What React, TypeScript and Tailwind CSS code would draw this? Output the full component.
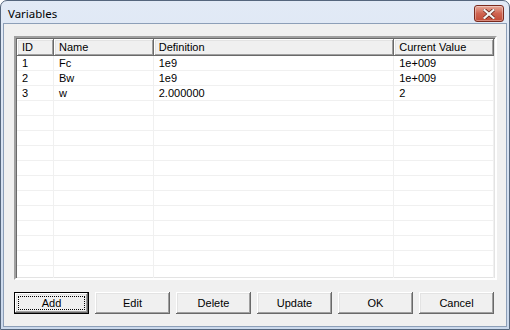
import { useState } from "react";

type Row = { id: number; name: string; def: string; value: string };

const rows: Row[] = [
  { id: 1, name: "Fc", def: "1e9", value: "1e+009" },
  { id: 2, name: "Bw", def: "1e9", value: "1e+009" },
  { id: 3, name: "w", def: "2.000000", value: "2" },
];

const raised =
  "shadow-[inset_-1px_-1px_#696969,inset_1px_1px_#ffffff,inset_-2px_-2px_#a0a0a0,inset_2px_2px_#e3e3e3]";

const cols = ["w-[37px]", "w-[100px]", "w-[241px]", "w-[100px]"];

const WinButton = ({ label, isDefault }: { label: string; isDefault?: boolean }) => {
  if (isDefault) {
    return (
      <button className="w-[75px] h-[22px] border border-black bg-[#f0f0f0] p-0">
        <div className={`w-full h-full p-[3px] ${raised}`}>
          <div className="w-full h-full border border-dotted border-black flex items-center justify-center text-[11px] leading-none">
            {label}
          </div>
        </div>
      </button>
    );
  }
  return (
    <button className={`w-[75px] h-[22px] bg-[#f0f0f0] flex items-center justify-center text-[11px] leading-none ${raised}`}>
      {label}
    </button>
  );
};

const CloseButton = () => (
  <div className="w-[30px] h-[17px] mt-[4px] rounded-[3px] border border-[#7a2a1e] bg-gradient-to-b from-[#e6a99a] via-[#cf6451] to-[#c24b36] flex items-center justify-center shadow-[inset_0_0_0_1px_rgba(255,255,255,0.35)]">
    <svg width="12" height="10" viewBox="0 0 12 10">
      <path d="M1.5 1 L10.5 9 M10.5 1 L1.5 9" stroke="#5a1a10" strokeWidth="3.6" strokeLinecap="square" />
      <path d="M1.5 1 L10.5 9 M10.5 1 L1.5 9" stroke="#f4f4f4" strokeWidth="2.2" strokeLinecap="square" />
    </svg>
  </div>
);

const App = () => {
  const [selected] = useState<number | null>(null);
  const filler = Array.from({ length: 12 });

  return (
    <div
      className="w-[510px] h-[330px] overflow-hidden"
      style={{ fontFamily: '"Liberation Sans", Arial, sans-serif' }}
    >
      <div className="w-full h-full rounded-t-[7px] border border-[#55667d] bg-gradient-to-b from-[#e2eaf6] to-[#cbd9ec] flex flex-col px-[2px] pb-[2px]">
        {/* title bar */}
        <div className="h-[22px] flex items-start justify-between pl-[5px] pr-[3px] shrink-0">
          <span
            className="text-[11.5px] mt-[4px] text-black"
            style={{ fontFamily: '"Noto Sans", "Liberation Sans", sans-serif' }}
          >
            Variables
          </span>
          <CloseButton />
        </div>

        {/* client */}
        <div className="flex-1 border border-[#8d9fb8] bg-[#f0f0f0] flex flex-col pl-[10px] pr-[9px] pt-[12px] pb-[11px]">
          <div className="h-[244px] bg-white border-2 border-t-[#a0a0a0] border-l-[#a0a0a0] border-b-white border-r-white shadow-[inset_1px_1px_#696969,inset_-1px_-1px_#e3e3e3] p-[1px] overflow-hidden">
            <div className="flex h-[17px]">
              {["ID", "Name", "Definition", "Current Value"].map((h, i) => (
                <div
                  key={h}
                  className={`${cols[i]} h-full bg-[#f0f0f0] flex items-center pl-[5px] text-[11px] text-black ${raised}`}
                >
                  {h}
                </div>
              ))}
            </div>
            {rows.map((r) => (
              <div key={r.id} className={`flex h-[15px] border-b border-[#f0f0f0] ${selected === r.id ? "bg-blue-200" : ""}`}>
                {[String(r.id), r.name, r.def, r.value].map((c, i) => (
                  <div
                    key={i}
                    className={`${cols[i]} h-full border-r border-[#f0f0f0] flex items-center pl-[5px] text-[11px] text-black`}
                  >
                    {c}
                  </div>
                ))}
              </div>
            ))}
            {filler.map((_, k) => (
              <div key={k} className="flex h-[15px] border-b border-[#f0f0f0]">
                {cols.map((w, i) => (
                  <div key={i} className={`${w} h-full border-r border-[#f0f0f0]`} />
                ))}
              </div>
            ))}
          </div>

          <div className="flex gap-[6px] mt-[12px]">
            <WinButton label="Add" isDefault />
            <WinButton label="Edit" />
            <WinButton label="Delete" />
            <WinButton label="Update" />
            <WinButton label="OK" />
            <WinButton label="Cancel" />
          </div>
        </div>
      </div>
    </div>
  );
};

export default App;
